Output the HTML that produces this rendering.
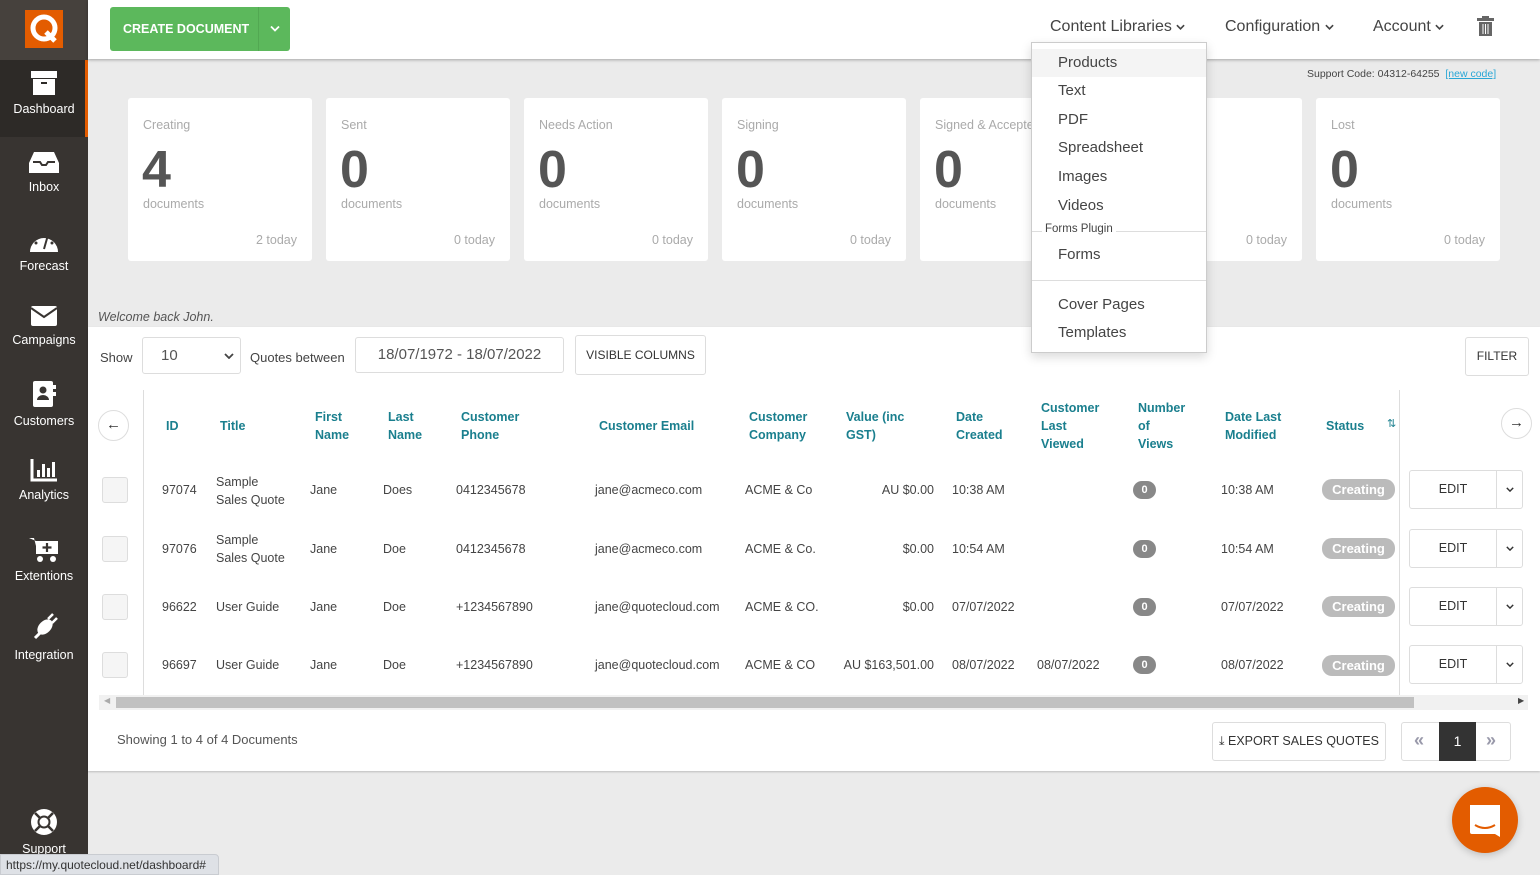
<!DOCTYPE html>
<html><head><meta charset="utf-8"><style>
*{box-sizing:border-box;margin:0;padding:0}
body{width:1540px;height:875px;overflow:hidden;background:#ebebeb;font-family:"Liberation Sans",sans-serif;color:#444;position:relative;font-size:13px}
.a{position:absolute}
#side{left:0;top:0;width:88px;height:875px;background:#383431}
#logo{left:0;top:0;width:88px;height:60px;background:#46413d}
.nav{position:absolute;left:0;width:88px;text-align:center;color:#fff;font-size:12.5px}
.nav svg{display:block;margin:0 auto 6px}
#top{left:88px;top:0;width:1452px;height:59px;background:#fff;box-shadow:0 1px 3px rgba(0,0,0,.3)}
.card{position:absolute;top:98px;width:184px;height:163px;background:#fff;border-radius:3px}
.card .t{position:absolute;left:15px;top:20px;color:#aaa;font-size:12.5px}
.card .n{position:absolute;left:14px;top:42px;color:#555;font-size:52px;font-weight:bold}
.card .d{position:absolute;left:15px;top:99px;color:#aaa;font-size:12.5px}
.card .td{position:absolute;right:15px;top:135px;color:#aaa;font-size:12.5px}
#panel{left:88px;top:327px;width:1452px;height:444px;background:#fff;box-shadow:0 1px 2px rgba(0,0,0,.2)}
.h{position:absolute;color:#1a7f8e;font-weight:bold;font-size:12.5px;line-height:18px}
.c{position:absolute;font-size:12.5px;color:#444;line-height:18px}
.btn{position:absolute;border:1px solid #ddd;border-radius:3px;background:#fff}
.badge{position:absolute;width:23px;height:18px;border-radius:9px;background:#888;color:#fff;font-size:11px;font-weight:bold;text-align:center;line-height:18px}
.st{position:absolute;width:73px;height:21px;border-radius:10px;background:#bbb;color:#fff;font-weight:bold;font-size:13px;text-align:center;line-height:21px}
.cb{position:absolute;left:102px;width:26px;height:26px;border:1px solid #ddd;border-radius:3px;background:#f5f5f5}
.menu div{position:absolute;left:26px;font-size:15px;color:#444}
.chev{display:inline-block;vertical-align:middle}
</style></head><body>
<svg width="0" height="0" style="position:absolute"><defs><symbol id="cv" viewBox="0 0 10 6"><path d="M1 1l4 4 4-4" stroke="currentColor" stroke-width="1.8" fill="none"/></symbol></defs></svg>
<div id="side" class="a"></div>
<div id="logo" class="a"><div class="a" style="left:25px;top:10px;width:38px;height:38px;background:#e35c00"><svg width="38" height="38"><circle cx="19" cy="18" r="11" fill="none" stroke="#fff" stroke-width="5"/><path d="M21 22 L30 31" stroke="#fff" stroke-width="5"/></svg></div></div>
<div class="a" style="left:0;top:60px;width:88px;height:77px;background:#2d2a27;border-right:3px solid #e35c00"></div>
<div class="nav" style="top:70px"><svg width="28" height="26"><rect x="1" y="1" width="26" height="7" fill="#fff"/><rect x="3" y="9" width="22" height="16" fill="#fff"/><rect x="11" y="12" width="6" height="2" fill="#2d2a27"/></svg>Dashboard</div>
<div class="nav" style="top:150px"><svg width="32" height="24"><path d="M6 2h20l5 11v10H1V13z" fill="#fff"/><path d="M5 12h7l2 3h4l2-3h7" stroke="#383431" stroke-width="2" fill="none"/></svg>Inbox</div>
<div class="nav" style="top:227px"><svg width="32" height="26"><path d="M2 25a14 14 0 1 1 28 0z" fill="#fff"/><path d="M16 22l4-14" stroke="#383431" stroke-width="2"/><circle cx="8" cy="16" r="1.5" fill="#383431"/><circle cx="24" cy="16" r="1.5" fill="#383431"/><circle cx="11" cy="9" r="1.5" fill="#383431"/></svg>Forecast</div>
<div class="nav" style="top:305px"><svg width="28" height="22"><rect x="1" y="1" width="26" height="20" rx="2" fill="#fff"/><path d="M1 3l13 9 13-9" stroke="#383431" stroke-width="2" fill="none"/></svg>Campaigns</div>
<div class="nav" style="top:380px"><svg width="26" height="28"><rect x="2" y="1" width="20" height="26" rx="2" fill="#fff"/><circle cx="12" cy="10" r="3.5" fill="#383431"/><path d="M6 20a6 5 0 0 1 12 0z" fill="#383431"/><rect x="22" y="5" width="3" height="4" fill="#fff"/><rect x="22" y="12" width="3" height="4" fill="#fff"/></svg>Customers</div>
<div class="nav" style="top:458px"><svg width="28" height="24"><path d="M2 1v21h25" stroke="#fff" stroke-width="3" fill="none"/><rect x="7" y="12" width="3" height="7" fill="#fff"/><rect x="12" y="6" width="3" height="13" fill="#fff"/><rect x="17" y="10" width="3" height="9" fill="#fff"/><rect x="22" y="4" width="3" height="15" fill="#fff"/></svg>Analytics</div>
<div class="nav" style="top:535px"><svg width="32" height="28"><path d="M1 3h5l4 16h17l3-13H8" fill="#fff"/><rect x="8" y="6" width="22" height="13" fill="#fff"/><path d="M19 8v9M14.5 12.5h9" stroke="#383431" stroke-width="2.2"/><circle cx="12" cy="24" r="3" fill="#fff"/><circle cx="25" cy="24" r="3" fill="#fff"/></svg>Extentions</div>
<div class="nav" style="top:612px"><svg width="30" height="30"><path d="M6 26l5-5" stroke="#fff" stroke-width="3"/><ellipse cx="16" cy="15" rx="6" ry="9" transform="rotate(45 16 15)" fill="#fff"/><path d="M19 7l5-5M23 11l5-5" stroke="#fff" stroke-width="2.5"/></svg>Integration</div>
<div class="nav" style="top:808px"><svg width="28" height="28"><circle cx="14" cy="14" r="13" fill="#fff"/><circle cx="14" cy="14" r="6.5" fill="#383431"/><circle cx="14" cy="14" r="4.5" fill="#fff"/><path d="M5 5l5 5M23 5l-5 5M5 23l5-5M23 23l-5-5" stroke="#383431" stroke-width="2.5"/></svg>Support</div>

<div id="top" class="a"></div>
<div class="a" style="left:110px;top:7px;width:180px;height:44px;background:#5cb85c;border-radius:3px;color:#fff;font-weight:bold;font-size:12.5px;line-height:44px;padding-left:13px">CREATE DOCUMENT<div class="a" style="left:148px;top:0;width:32px;height:44px;border-left:1px solid #52a852;text-align:center;color:#fff"><svg class="chev" width="10" height="7" style="margin-top:-3px"><use href="#cv"/></svg></div></div>
<div class="a" style="left:1050px;top:18px;font-size:16px;color:#444">Content Libraries <svg class="chev" width="9" height="6" style="color:#444"><use href="#cv"/></svg></div>
<div class="a" style="left:1225px;top:18px;font-size:16px;color:#444">Configuration <svg class="chev" width="9" height="6" style="color:#444"><use href="#cv"/></svg></div>
<div class="a" style="left:1373px;top:18px;font-size:16px;color:#444">Account <svg class="chev" width="9" height="6" style="color:#444"><use href="#cv"/></svg></div>
<svg class="a" style="left:1477px;top:16px" width="17" height="20"><rect x="0" y="2" width="17" height="3" fill="#666"/><rect x="5" y="0" width="7" height="3" fill="#666"/><rect x="2" y="6" width="13" height="14" fill="#666"/><path d="M6 8v10M8.5 8v10M11 8v10" stroke="#fff" stroke-width="1"/></svg>

<div class="a" style="left:1307px;top:68px;font-size:10.5px;color:#444">Support Code: 04312-64255 &nbsp;<span style="color:#2aa7d6;text-decoration:underline">[new code]</span></div>

<div class="card" style="left:128px"><div class="t">Creating</div><div class="n">4</div><div class="d">documents</div><div class="td">2 today</div></div>
<div class="card" style="left:326px"><div class="t">Sent</div><div class="n">0</div><div class="d">documents</div><div class="td">0 today</div></div>
<div class="card" style="left:524px"><div class="t">Needs Action</div><div class="n">0</div><div class="d">documents</div><div class="td">0 today</div></div>
<div class="card" style="left:722px"><div class="t">Signing</div><div class="n">0</div><div class="d">documents</div><div class="td">0 today</div></div>
<div class="card" style="left:920px"><div class="t">Signed &amp; Accepted</div><div class="n">0</div><div class="d">documents</div><div class="td">0 today</div></div>
<div class="card" style="left:1118px"><div class="td">0 today</div></div>
<div class="card" style="left:1316px"><div class="t">Lost</div><div class="n">0</div><div class="d">documents</div><div class="td">0 today</div></div>

<div class="a" style="left:98px;top:310px;font-style:italic;font-size:12.5px;color:#555">Welcome back John.</div>
<div id="panel" class="a"></div>
<div class="a" style="left:100px;top:350px;font-size:13px">Show</div>
<div class="btn" style="left:142px;top:337px;width:99px;height:37px;font-size:15px;line-height:35px;padding-left:18px;color:#555">10<svg class="a" style="right:6px;top:15px;color:#444" width="10" height="6"><use href="#cv"/></svg></div>
<div class="a" style="left:250px;top:350px;font-size:13px">Quotes between</div>
<div class="btn" style="left:355px;top:337px;width:209px;height:36px;font-size:15px;line-height:34px;text-align:center;color:#555">18/07/1972 - 18/07/2022</div>
<div class="btn" style="left:575px;top:335px;width:131px;height:40px;font-size:12px;line-height:38px;text-align:center;color:#333">VISIBLE COLUMNS</div>
<div class="btn" style="left:1465px;top:337px;width:64px;height:39px;font-size:12px;line-height:37px;text-align:center;color:#333">FILTER</div>

<div class="a" style="left:143px;top:390px;width:1px;height:305px;background:#ddd"></div>
<div class="a" style="left:1399px;top:390px;width:1px;height:305px;background:#ddd"></div>
<div class="a" style="left:98px;top:410px;width:31px;height:31px;border:1px solid #ddd;border-radius:50%;text-align:center;line-height:28px;font-size:15px;color:#333">&#8592;</div>
<div class="a" style="left:1501px;top:408px;width:31px;height:31px;border:1px solid #ddd;border-radius:50%;text-align:center;line-height:28px;font-size:15px;color:#333">&#8594;</div>

<div class="h" style="left:166px;top:417px">ID</div>
<div class="h" style="left:220px;top:417px">Title</div>
<div class="h" style="left:315px;top:408px">First<br>Name</div>
<div class="h" style="left:388px;top:408px">Last<br>Name</div>
<div class="h" style="left:461px;top:408px">Customer<br>Phone</div>
<div class="h" style="left:599px;top:417px">Customer Email</div>
<div class="h" style="left:749px;top:408px">Customer<br>Company</div>
<div class="h" style="left:846px;top:408px">Value (inc<br>GST)</div>
<div class="h" style="left:956px;top:408px">Date<br>Created</div>
<div class="h" style="left:1041px;top:399px">Customer<br>Last<br>Viewed</div>
<div class="h" style="left:1138px;top:399px">Number<br>of<br>Views</div>
<div class="h" style="left:1225px;top:408px">Date Last<br>Modified</div>
<div class="h" style="left:1326px;top:417px">Status</div>
<div class="a" style="left:1387px;top:417px;font-size:11px;color:#1a7f8e">&#8645;</div>

<div class="cb" style="top:477px"></div>
<div class="c" style="left:162px;top:481px">97074</div><div class="c" style="left:216px;top:473px">Sample<br>Sales Quote</div><div class="c" style="left:310px;top:481px">Jane</div><div class="c" style="left:383px;top:481px">Does</div><div class="c" style="left:456px;top:481px">0412345678</div><div class="c" style="left:595px;top:481px">jane@acmeco.com</div><div class="c" style="left:745px;top:481px">ACME &amp; Co</div><div class="c" style="right:606px;top:481px">AU $0.00</div><div class="c" style="left:952px;top:481px">10:38 AM</div><div class="badge" style="left:1133px;top:481px">0</div><div class="c" style="left:1221px;top:481px">10:38 AM</div><div class="st" style="left:1322px;top:479px">Creating</div>
<div class="cb" style="top:536px"></div>
<div class="c" style="left:162px;top:540px">97076</div><div class="c" style="left:216px;top:531px">Sample<br>Sales Quote</div><div class="c" style="left:310px;top:540px">Jane</div><div class="c" style="left:383px;top:540px">Doe</div><div class="c" style="left:456px;top:540px">0412345678</div><div class="c" style="left:595px;top:540px">jane@acmeco.com</div><div class="c" style="left:745px;top:540px">ACME &amp; Co.</div><div class="c" style="right:606px;top:540px">$0.00</div><div class="c" style="left:952px;top:540px">10:54 AM</div><div class="badge" style="left:1133px;top:540px">0</div><div class="c" style="left:1221px;top:540px">10:54 AM</div><div class="st" style="left:1322px;top:538px">Creating</div>
<div class="cb" style="top:594px"></div>
<div class="c" style="left:162px;top:598px">96622</div><div class="c" style="left:216px;top:598px">User Guide</div><div class="c" style="left:310px;top:598px">Jane</div><div class="c" style="left:383px;top:598px">Doe</div><div class="c" style="left:456px;top:598px">+1234567890</div><div class="c" style="left:595px;top:598px">jane@quotecloud.com</div><div class="c" style="left:745px;top:598px">ACME &amp; CO.</div><div class="c" style="right:606px;top:598px">$0.00</div><div class="c" style="left:952px;top:598px">07/07/2022</div><div class="badge" style="left:1133px;top:598px">0</div><div class="c" style="left:1221px;top:598px">07/07/2022</div><div class="st" style="left:1322px;top:596px">Creating</div>
<div class="cb" style="top:652px"></div>
<div class="c" style="left:162px;top:656px">96697</div><div class="c" style="left:216px;top:656px">User Guide</div><div class="c" style="left:310px;top:656px">Jane</div><div class="c" style="left:383px;top:656px">Doe</div><div class="c" style="left:456px;top:656px">+1234567890</div><div class="c" style="left:595px;top:656px">jane@quotecloud.com</div><div class="c" style="left:745px;top:656px">ACME &amp; CO</div><div class="c" style="right:606px;top:656px">AU $163,501.00</div><div class="c" style="left:952px;top:656px">08/07/2022</div><div class="c" style="left:1037px;top:656px">08/07/2022</div><div class="badge" style="left:1133px;top:656px">0</div><div class="c" style="left:1221px;top:656px">08/07/2022</div><div class="st" style="left:1322px;top:655px">Creating</div>

<div class="btn" style="left:1409px;top:470px;width:114px;height:39px"><div class="a" style="left:0;top:0;width:87px;height:37px;border-right:1px solid #ddd;text-align:center;line-height:37px;font-size:12.5px;color:#333">EDIT</div><svg class="a" style="left:96px;top:16px;color:#333" width="8" height="5"><use href="#cv"/></svg></div>
<div class="btn" style="left:1409px;top:529px;width:114px;height:39px"><div class="a" style="left:0;top:0;width:87px;height:37px;border-right:1px solid #ddd;text-align:center;line-height:37px;font-size:12.5px;color:#333">EDIT</div><svg class="a" style="left:96px;top:16px;color:#333" width="8" height="5"><use href="#cv"/></svg></div>
<div class="btn" style="left:1409px;top:587px;width:114px;height:39px"><div class="a" style="left:0;top:0;width:87px;height:37px;border-right:1px solid #ddd;text-align:center;line-height:37px;font-size:12.5px;color:#333">EDIT</div><svg class="a" style="left:96px;top:16px;color:#333" width="8" height="5"><use href="#cv"/></svg></div>
<div class="btn" style="left:1409px;top:645px;width:114px;height:39px"><div class="a" style="left:0;top:0;width:87px;height:37px;border-right:1px solid #ddd;text-align:center;line-height:37px;font-size:12.5px;color:#333">EDIT</div><svg class="a" style="left:96px;top:16px;color:#333" width="8" height="5"><use href="#cv"/></svg></div>

<div class="a" style="left:99px;top:695px;width:1429px;height:15px;background:#f1f1f1"></div>
<div class="a" style="left:116px;top:697px;width:1298px;height:11px;background:#c1c1c1"></div>
<div class="a" style="left:104px;top:696px;font-size:8px;color:#aaa">&#9664;</div>
<div class="a" style="left:1518px;top:696px;font-size:8px;color:#444">&#9654;</div>

<div class="a" style="left:117px;top:732px;font-size:13px;color:#555">Showing 1 to 4 of 4 Documents</div>
<div class="btn" style="left:1212px;top:722px;width:174px;height:39px;font-size:12.5px;line-height:37px;text-align:center;color:#333">&#10515; EXPORT SALES QUOTES</div>
<div class="btn" style="left:1401px;top:722px;width:110px;height:39px"><div class="a" style="left:12px;top:7px;font-size:18px;font-weight:bold;color:#99a">&#171;</div><div class="a" style="left:37px;top:-1px;width:37px;height:39px;background:#333;color:#fff;text-align:center;line-height:39px;font-size:14px">1</div><div class="a" style="left:84px;top:7px;font-size:18px;font-weight:bold;color:#99a">&#187;</div></div>

<div class="a" style="left:1452px;top:787px;width:66px;height:66px;border-radius:50%;background:#e35c00;box-shadow:0 2px 8px rgba(0,0,0,.2)"><svg width="66" height="66"><path d="M18 18h30v32l-5-3H20a2 2 0 0 1-2-2z" fill="#fff"/><path d="M23 38q10 6 20 0" stroke="#e35c00" stroke-width="2" fill="none"/></svg></div>

<div class="a" style="left:0;top:854px;width:219px;height:21px;background:#dee1e6;border:1px solid #c9ccd1;border-radius:0 4px 0 0;font-size:12px;line-height:20px;padding-left:5px;color:#333">https://my.quotecloud.net/dashboard#</div>

<div class="a menu" style="left:1031px;top:42px;width:176px;height:311px;background:#fff;border:1px solid #ccc;box-shadow:0 4px 10px rgba(0,0,0,.15)">
<div style="left:0;top:6px;width:174px;height:28px;background:#f4f4f4"></div>
<div style="top:11px">Products</div><div style="top:39px">Text</div><div style="top:68px">PDF</div><div style="top:96px">Spreadsheet</div><div style="top:125px">Images</div><div style="top:154px">Videos</div>
<div style="left:0;top:188px;width:174px;height:1px;background:#ddd"></div>
<div style="left:10px;top:180px;font-size:11.5px;background:#fff;padding:0 3px">Forms Plugin</div>
<div style="top:203px">Forms</div>
<div style="left:0;top:237px;width:174px;height:1px;background:#ddd"></div>
<div style="top:253px">Cover Pages</div><div style="top:281px">Templates</div>
</div>
</body></html>
